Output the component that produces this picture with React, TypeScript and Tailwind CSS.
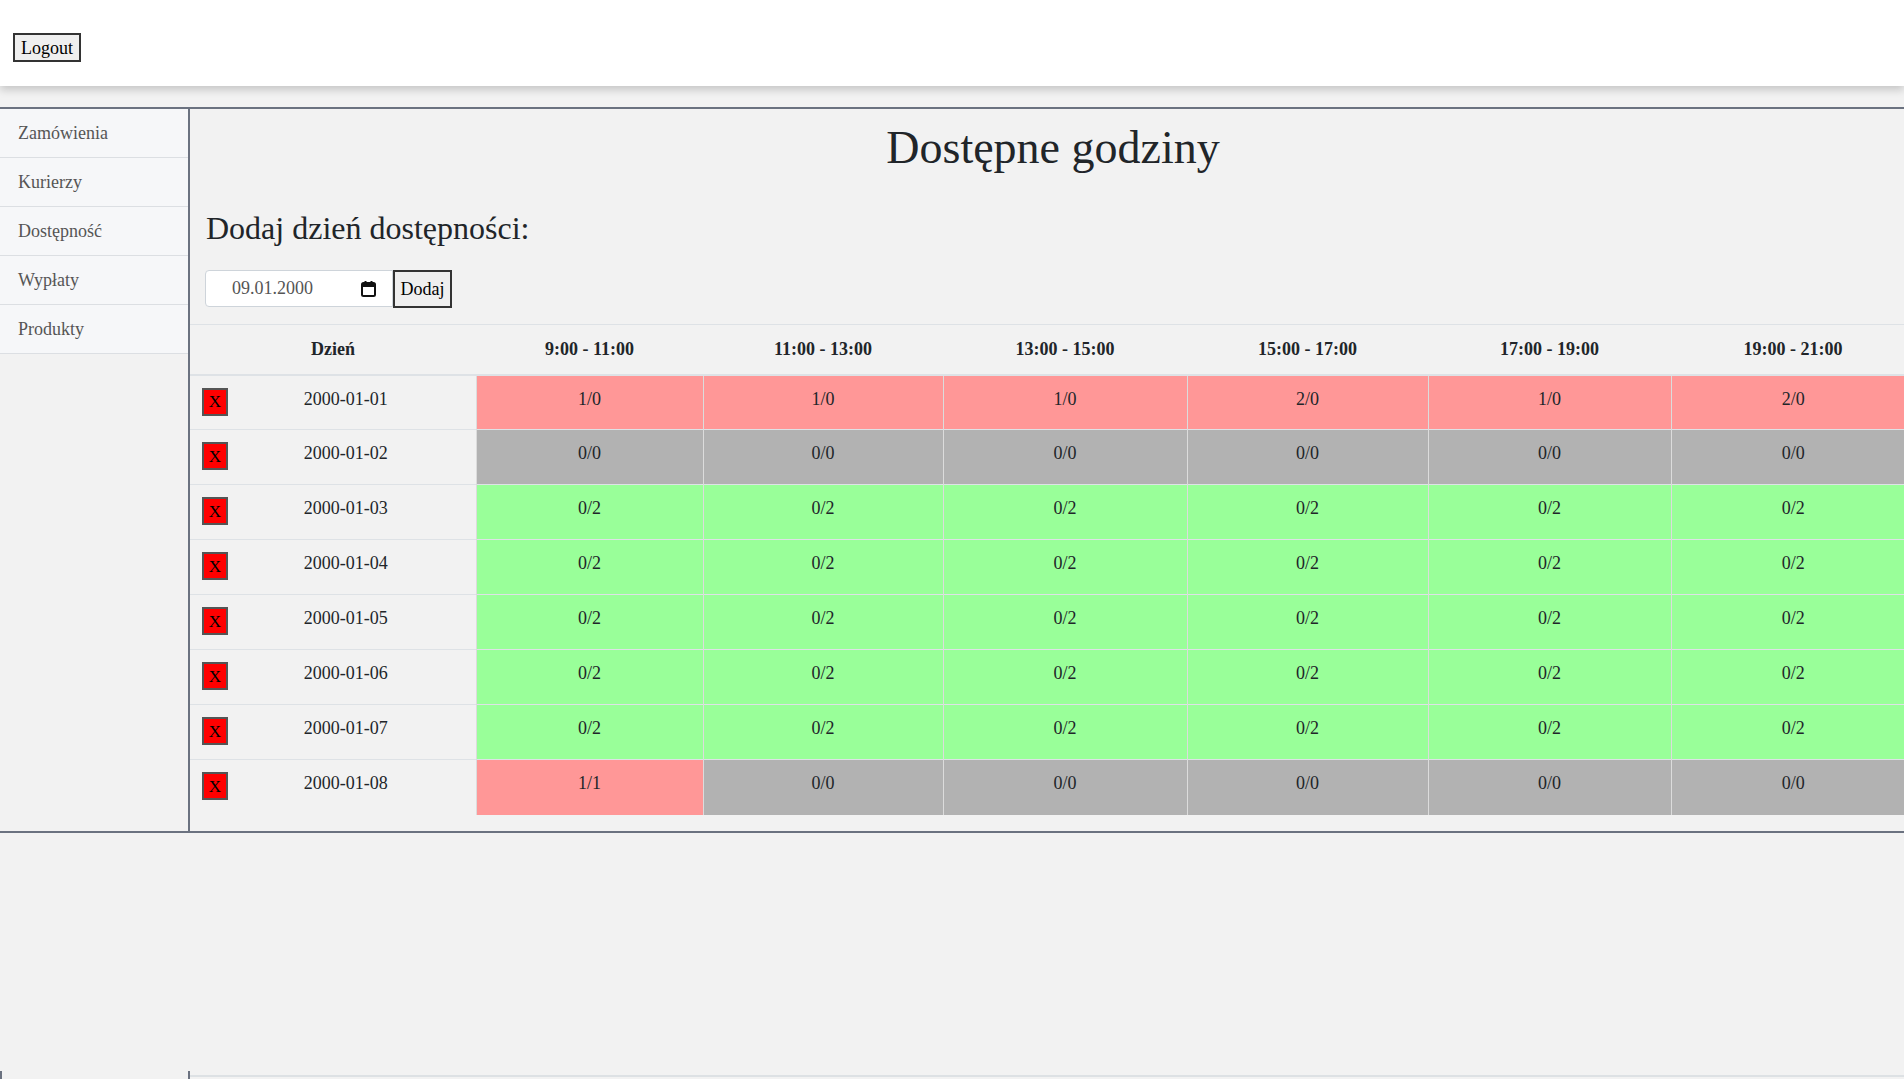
import React from "react";

type Cell = { v: string; c: "r" | "g" | "n" };

const hours = ["9:00 - 11:00", "11:00 - 13:00", "13:00 - 15:00", "15:00 - 17:00", "17:00 - 19:00", "19:00 - 21:00"];

const R = (v: string): Cell => ({ v, c: "r" });
const G = (v: string): Cell => ({ v, c: "g" });
const N = (v: string): Cell => ({ v, c: "n" });

const rows: { day: string; cells: Cell[] }[] = [
  { day: "2000-01-01", cells: [R("1/0"), R("1/0"), R("1/0"), R("2/0"), R("1/0"), R("2/0")] },
  { day: "2000-01-02", cells: [N("0/0"), N("0/0"), N("0/0"), N("0/0"), N("0/0"), N("0/0")] },
  { day: "2000-01-03", cells: [G("0/2"), G("0/2"), G("0/2"), G("0/2"), G("0/2"), G("0/2")] },
  { day: "2000-01-04", cells: [G("0/2"), G("0/2"), G("0/2"), G("0/2"), G("0/2"), G("0/2")] },
  { day: "2000-01-05", cells: [G("0/2"), G("0/2"), G("0/2"), G("0/2"), G("0/2"), G("0/2")] },
  { day: "2000-01-06", cells: [G("0/2"), G("0/2"), G("0/2"), G("0/2"), G("0/2"), G("0/2")] },
  { day: "2000-01-07", cells: [G("0/2"), G("0/2"), G("0/2"), G("0/2"), G("0/2"), G("0/2")] },
  { day: "2000-01-08", cells: [R("1/1"), N("0/0"), N("0/0"), N("0/0"), N("0/0"), N("0/0")] },
];

const bgFor = (c: Cell["c"]) =>
  c === "r" ? "bg-[#ff9797]" : c === "g" ? "bg-[#99ff99]" : "bg-[#b2b2b2]";

const menu = ["Zamówienia", "Kurierzy", "Dostępność", "Wypłaty", "Produkty"];

export default function App() {
  return (
    <div className="min-h-screen overflow-hidden bg-[#f2f2f2] font-['Liberation_Serif',serif] text-[#212529]">
      <header className="h-[86px] bg-white shadow-[0_4px_8px_rgba(0,0,0,0.18)] relative z-10 pt-[33px] pl-[13px]">
        <button className="h-[29px] w-[68px] border-2 border-[#333] bg-[#efefef] text-[18px] leading-none text-black">
          Logout
        </button>
      </header>

      <div className="mt-[21px] flex border-t-2 border-b-2 border-[#6b7280]">
        <aside className="w-[190px] shrink-0 border-r-2 border-[#6b7280]">
          {menu.map((m) => (
            <div
              key={m}
              className="h-[49px] border-b border-[#dcdfe3] bg-[#f6f7f9] pl-[18px] flex items-center text-[18px] text-[#555]"
            >
              {m}
            </div>
          ))}
        </aside>

        <main className="flex-1 min-w-0 overflow-hidden pt-[15px] pb-[16px]">
          <h1 className="pl-[12px] text-center text-[46px] leading-[48px] text-[#212529]">Dostępne godziny</h1>
          <h2 className="mt-[39px] pl-[16px] text-[32px] leading-[34px] text-[#212529]">Dodaj dzień dostępności:</h2>

          <div className="mt-[25px] pl-[15px] flex items-start">
            <div className="h-[37px] w-[188px] bg-white border border-[#ced4da] rounded-l-[4px] flex items-center pl-[26px] pr-[16px] justify-between">
              <span className="text-[18px] text-[#555]">09.01.2000</span>
              <svg width="15" height="16" viewBox="0 0 15 16">
                <rect x="1" y="2" width="13" height="13" rx="1.5" fill="none" stroke="#111" strokeWidth="2" />
                <rect x="1" y="2" width="13" height="4" fill="#111" />
                <rect x="3.5" y="0" width="2" height="3" fill="#111" />
                <rect x="9.5" y="0" width="2" height="3" fill="#111" />
              </svg>
            </div>
            <button className="h-[38px] w-[59px] border-2 border-[#333] bg-[#efefef] text-[18px] leading-none text-black">
              Dodaj
            </button>
          </div>

          <table className="mt-[16px] w-[1725px] table-fixed border-collapse">
            <colgroup>
              <col className="w-[286px]" />
              <col className="w-[227px]" />
              <col className="w-[240px]" />
              <col className="w-[244px]" />
              <col className="w-[241px]" />
              <col className="w-[243px]" />
              <col />
            </colgroup>
            <thead>
              <tr className="border-t border-b-2 border-[#dee2e6]">
                <th className="h-[50px] p-0 text-center text-[18px] font-bold leading-[24px]">Dzień</th>
                {hours.map((h) => (
                  <th key={h} className="h-[50px] p-0 text-center text-[18px] font-bold leading-[24px]">
                    {h}
                  </th>
                ))}
              </tr>
            </thead>
            <tbody>
              {rows.map((r, i) => (
                <tr key={r.day} className={i < rows.length - 1 ? "border-b border-[#dee2e6]" : ""}>
                  <td className="h-[55px] align-top px-[12px] pt-[11px] text-center">
                    <button className="float-left mt-[1px] h-[28px] w-[26px] border-2 border-[#555] bg-[#ff0000] text-[17px] leading-none text-black">
                      X
                    </button>
                    <span className="text-[18px] leading-[24px]">{r.day}</span>
                  </td>
                  {r.cells.map((c, j) => (
                    <td
                      key={j}
                      className={`h-[55px] align-top pt-[11px] text-center text-[18px] leading-[24px] border-l border-[#dcdcdc] ${bgFor(c.c)}`}
                    >
                      {c.v}
                    </td>
                  ))}
                </tr>
              ))}
            </tbody>
          </table>
        </main>
      </div>

      <div className="mt-[238px] flex h-[10px]">
        <div className="w-[190px] border-l-2 border-[#6b7280] border-r-2"></div>
        <div className="flex-1 pt-[4px]">
          <div className="border-t-2 border-[#dde1e4]"></div>
        </div>
      </div>
    </div>
  );
}
